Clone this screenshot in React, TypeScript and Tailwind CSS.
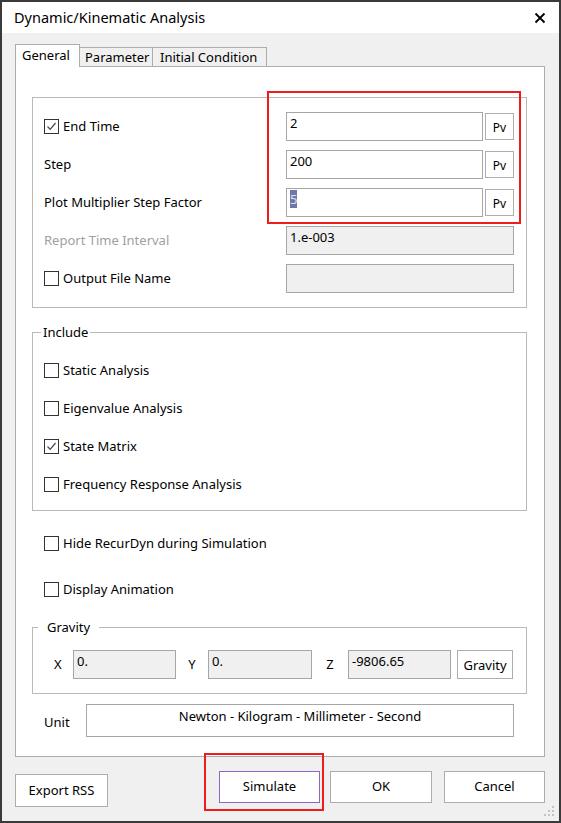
import React from 'react';

const font = { fontFamily: '"Noto Sans", "Open Sans", sans-serif' };

function Check({ checked = false }: { checked?: boolean }) {
  return (
    <span className="w-[15px] h-[15px] border border-[#333] bg-white flex items-center justify-center shrink-0">
      {checked && (
        <svg width="11" height="11" viewBox="0 0 11 11">
          <path d="M1.5 5.5 L4.2 8.3 L9.5 2" fill="none" stroke="#444" strokeWidth="1.2" />
        </svg>
      )}
    </span>
  );
}

function CheckRow({ label, checked }: { label: string; checked?: boolean }) {
  return (
    <div className="h-[29px] flex items-center gap-[4px]">
      <Check checked={checked} />
      <span>{label}</span>
    </div>
  );
}

function Pv() {
  return (
    <button className="w-[29px] h-[27px] mt-[1px] border border-[#adadad] bg-white text-[12px] flex items-center justify-center pt-[3px]">
      Pv
    </button>
  );
}

function Edit({ value, pv, selected }: { value: string; pv?: boolean; selected?: boolean }) {
  return (
    <div className="flex gap-[2px] w-[228px]">
      <div className="w-[197px] h-[29px] border border-[#a6a6a6] bg-white px-[3px] pt-[1px]">
        {selected ? <span className="bg-[#6f78a8] text-[#dfe3f5]">{value}</span> : value}
      </div>
      {pv && <Pv />}
    </div>
  );
}

function GreyField({ value, w }: { value: string; w: string }) {
  return (
    <div className={`${w} h-[29px] border border-[#a6a6a6] bg-[#f0f0f0] px-[3px] pt-[1px]`}>{value}</div>
  );
}

export default function App() {
  return (
    <div
      className="w-[561px] h-[823px] border-2 border-[#3a3a3a] bg-[#f0f0f0] flex flex-col text-[13px] text-black relative"
      style={font}
    >
      <div className="h-[31px] bg-white flex items-center justify-between pl-[12px] pr-[13px] shrink-0">
        <span className="text-[14.5px]">Dynamic/Kinematic Analysis</span>
        <svg width="12" height="12" viewBox="0 0 12 12">
          <path d="M1.5 1.5 L10.5 10.5 M10.5 1.5 L1.5 10.5" stroke="#000" strokeWidth="1.8" />
        </svg>
      </div>

      <div className="flex-1 flex flex-col pl-[13px] pr-[14px] pt-[11px]">
        <div className="flex items-end h-[23px]">
          <div className="w-[65px] h-[23px] bg-white border border-b-0 border-[#adadad] pl-[6px] pt-[1px] relative z-10">
            General
          </div>
          <div className="w-[73px] h-[20px] border border-l-0 border-[#adadad] bg-[#f0f0f0] pl-[5px] leading-[18px]">
            Parameter
          </div>
          <div className="w-[114px] h-[20px] border border-l-0 border-[#adadad] bg-[#f0f0f0] pl-[7px] leading-[18px]">
            Initial Condition
          </div>
        </div>

        <div className="h-[691px] -mt-px bg-white border border-[#adadad] pl-[16px] pr-[17px] pt-[30px] flex flex-col">
          <div className="relative border border-[#b9b9b9] h-[211px] pl-[11px] pr-[12px] pt-[14px] flex flex-col gap-[9px]">
            <div className="h-[29px] flex items-center">
              <div className="flex-1 flex items-center gap-[4px]">
                <Check checked />
                <span>End Time</span>
              </div>
              <Edit value="2" pv />
            </div>
            <div className="h-[29px] flex items-center">
              <div className="flex-1">Step</div>
              <Edit value="200" pv />
            </div>
            <div className="h-[29px] flex items-center">
              <div className="flex-1">Plot Multiplier Step Factor</div>
              <Edit value="5" pv selected />
            </div>
            <div className="h-[29px] flex items-center">
              <div className="flex-1 text-[#a0a0a0]">Report Time Interval</div>
              <GreyField value="1.e-003" w="w-[228px]" />
            </div>
            <div className="h-[29px] flex items-center">
              <div className="flex-1 flex items-center gap-[4px]">
                <Check />
                <span>Output File Name</span>
              </div>
              <GreyField value="" w="w-[228px]" />
            </div>
            <div className="absolute left-[234px] top-[-7px] w-[254px] h-[133px] border-2 border-[#ee1c1c]" />
          </div>

          <fieldset className="mt-[15px] border border-[#b9b9b9] pb-[11px]">
            <legend className="ml-[8px] px-[2px] leading-[18px]">Include</legend>
            <div className="pl-[11px] pt-[15px] flex flex-col gap-[9px]">
              <CheckRow label="Static Analysis" />
              <CheckRow label="Eigenvalue Analysis" />
              <CheckRow label="State Matrix" checked />
              <CheckRow label="Frequency Response Analysis" />
            </div>
          </fieldset>

          <div className="pl-[12px] mt-[18px]">
            <CheckRow label="Hide RecurDyn during Simulation" />
          </div>
          <div className="pl-[12px] mt-[17px]">
            <CheckRow label="Display Animation" />
          </div>

          <fieldset className="mt-[14px] border border-[#b9b9b9] pb-[14px]">
            <legend className="ml-[5px] px-[9px] leading-[18px]">Gravity</legend>
            <div className="pt-[14px] pl-[21px] flex items-center">
              <span className="w-[19px]">X</span>
              <GreyField value="0." w="w-[103px]" />
              <span className="w-[32px] text-center">Y</span>
              <GreyField value="0." w="w-[104px]" />
              <span className="w-[36px] text-center">Z</span>
              <GreyField value="-9806.65" w="w-[103px]" />
              <button className="ml-[6px] w-[56px] h-[29px] border border-[#adadad] bg-white pt-[2px]">Gravity</button>
            </div>
          </fieldset>

          <div className="mt-[10px] flex items-center">
            <span className="w-[54px] pl-[12px] pt-[4px]">Unit</span>
            <div className="w-[428px] h-[33px] border border-[#a6a6a6] bg-white text-center pt-[2px]">
              Newton - Kilogram - Millimeter - Second
            </div>
          </div>
        </div>

        <div className="mt-[14px] flex items-start">
          <button className="mt-[3px] w-[93px] h-[33px] border border-[#adadad] bg-white">Export RSS</button>
          <div className="flex-1" />
          <div className="relative">
            <button className="w-[101px] h-[32px] border border-[#8f65c6] bg-white">Simulate</button>
            <div className="absolute left-[-15px] top-[-18px] w-[120px] h-[58px] border-2 border-[#ee1c1c]" />
          </div>
          <button className="ml-[10px] w-[102px] h-[32px] border border-[#adadad] bg-white">OK</button>
          <button className="ml-[12px] w-[101px] h-[32px] border border-[#adadad] bg-white">Cancel</button>
        </div>
      </div>

      <svg className="absolute right-[4px] bottom-[4px]" width="12" height="12" viewBox="0 0 12 12">
        {[[9, 1], [5, 5], [9, 5], [1, 9], [5, 9], [9, 9]].map(([x, y], i) => (
          <rect key={i} x={x} y={y} width="2" height="2" fill="#c4c4c4" />
        ))}
      </svg>
    </div>
  );
}
